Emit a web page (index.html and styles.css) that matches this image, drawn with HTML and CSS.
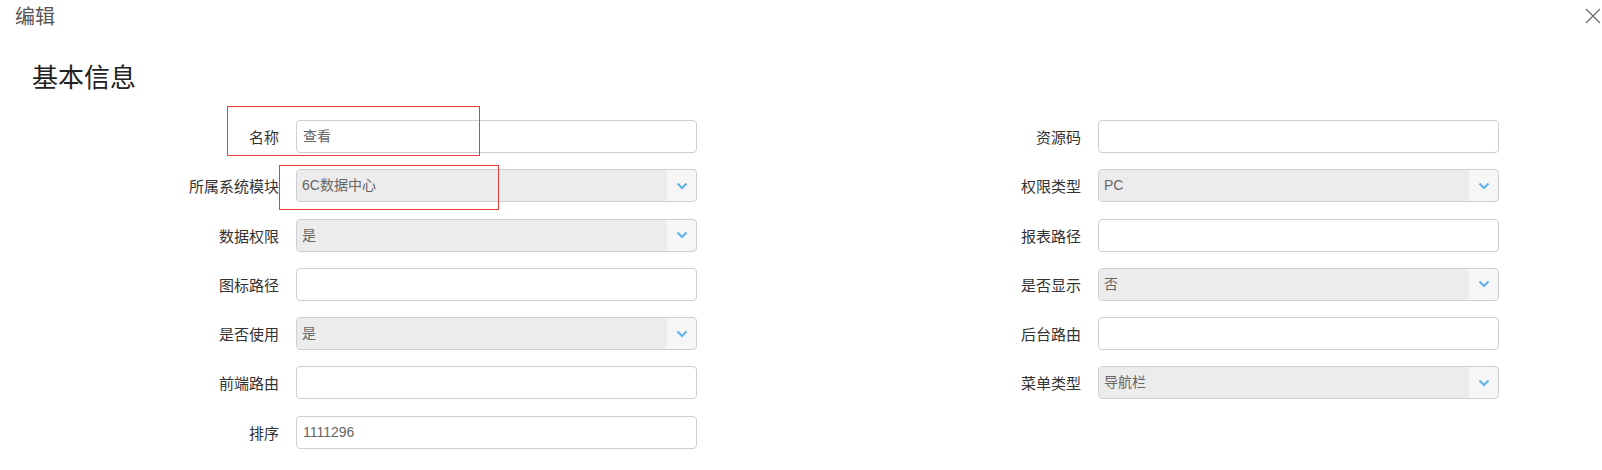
FILE: index.html
```html
<!DOCTYPE html>
<html lang="zh">
<head>
<meta charset="utf-8">
<title>编辑</title>
<link rel="stylesheet" href="styles.css">
</head>
<body>
<div class="dialog">
  <div class="dialog-head">
    <span class="dialog-title">编辑</span>
    <span class="close">
      <svg width="16" height="16" viewBox="0 0 16 16"><path d="M1 1L15 15M15 1L1 15" stroke="#6b6b6b" stroke-width="1.3" fill="none"/></svg>
    </span>
  </div>
  <h2 class="section-title">基本信息</h2>
  <div class="form">
    <div class="col">
      <div class="row"><label class="lbl">名称</label><div class="input">查看</div></div>
      <div class="row"><label class="lbl">所属系统模块</label><div class="select"><span class="val">6C数据中心</span><span class="arrow"><svg width="12" height="8" viewBox="0 0 12 8"><path d="M1.5 1.5L6 6L10.5 1.5" stroke="#62b3ec" stroke-width="2.2" fill="none"/></svg></span></div></div>
      <div class="row"><label class="lbl">数据权限</label><div class="select"><span class="val">是</span><span class="arrow"><svg width="12" height="8" viewBox="0 0 12 8"><path d="M1.5 1.5L6 6L10.5 1.5" stroke="#62b3ec" stroke-width="2.2" fill="none"/></svg></span></div></div>
      <div class="row"><label class="lbl">图标路径</label><div class="input"></div></div>
      <div class="row"><label class="lbl">是否使用</label><div class="select"><span class="val">是</span><span class="arrow"><svg width="12" height="8" viewBox="0 0 12 8"><path d="M1.5 1.5L6 6L10.5 1.5" stroke="#62b3ec" stroke-width="2.2" fill="none"/></svg></span></div></div>
      <div class="row"><label class="lbl">前端路由</label><div class="input"></div></div>
      <div class="row"><label class="lbl">排序</label><div class="input">1111296</div></div>
    </div>
    <div class="col">
      <div class="row"><label class="lbl">资源码</label><div class="input"></div></div>
      <div class="row"><label class="lbl">权限类型</label><div class="select"><span class="val">PC</span><span class="arrow"><svg width="12" height="8" viewBox="0 0 12 8"><path d="M1.5 1.5L6 6L10.5 1.5" stroke="#62b3ec" stroke-width="2.2" fill="none"/></svg></span></div></div>
      <div class="row"><label class="lbl">报表路径</label><div class="input"></div></div>
      <div class="row"><label class="lbl">是否显示</label><div class="select"><span class="val">否</span><span class="arrow"><svg width="12" height="8" viewBox="0 0 12 8"><path d="M1.5 1.5L6 6L10.5 1.5" stroke="#62b3ec" stroke-width="2.2" fill="none"/></svg></span></div></div>
      <div class="row"><label class="lbl">后台路由</label><div class="input"></div></div>
      <div class="row"><label class="lbl">菜单类型</label><div class="select"><span class="val">导航栏</span><span class="arrow"><svg width="12" height="8" viewBox="0 0 12 8"><path d="M1.5 1.5L6 6L10.5 1.5" stroke="#62b3ec" stroke-width="2.2" fill="none"/></svg></span></div></div>
    </div>
    <div class="mark mark-1"></div>
    <div class="mark mark-2"></div>
  </div>
</div>
</body>
</html>
```
FILE: styles.css
```css
* { box-sizing: border-box; }
html, body { margin: 0; padding: 0; background: #fff; }
body {
  font-family: "Noto Sans CJK SC", "Liberation Sans", sans-serif;
  color: #333;
  width: 1602px;
  height: 470px;
  overflow: hidden;
}
.dialog { position: relative; }
.dialog-head {
  height: 32px;
  display: flex;
  align-items: center;
  justify-content: space-between;
  padding: 0 1px 0 15px;
}
.dialog-title {
  font-size: 20px;
  color: #555;
  line-height: 32px;
}
.close { display: flex; width: 16px; height: 16px; margin-top: -1px; }
.section-title {
  margin: 0;
  padding: 24px 0 0 32px;
  height: 88px;
  font-size: 26px;
  font-weight: normal;
  color: #222;
  line-height: 40px;
}
.form {
  position: relative;
  display: grid;
  grid-template-columns: 802px 800px;
}
.col {
  display: flex;
  flex-direction: column;
  gap: 16.3px;
}
.row {
  display: flex;
  align-items: center;
  height: 33px;
}
.lbl {
  width: 280px;
  padding-right: 1px;
  text-align: right;
  font-size: 15px;
  color: #333;
  margin-right: 16px;
}
.input, .select {
  width: 401px;
  height: 33px;
  border: 1px solid #cfcfcf;
  border-radius: 4px;
  font-size: 14px;
  color: #666;
  line-height: 31px;
}
.input { padding-left: 6px; background: #fff; font-family: "Liberation Sans", "Noto Sans CJK SC", sans-serif; }
.select {
  display: flex;
  background: #f6f6f6;
  overflow: hidden;
}
.select .val {
  flex: 1;
  background: #ececec;
  border-radius: 0 4px 4px 0;
  padding-left: 5px;
  font-family: "Liberation Sans", "Noto Sans CJK SC", sans-serif;
}
.select .arrow {
  width: 29px;
  display: flex;
  align-items: center;
  justify-content: center;
}
.mark {
  position: absolute;
  border: 1px solid #ec3b3b;
}
.mark-1 { left: 227px; top: -14px; width: 253px; height: 50px; }
.mark-2 { left: 279px; top: 45px; width: 220px; height: 45px; }
```
